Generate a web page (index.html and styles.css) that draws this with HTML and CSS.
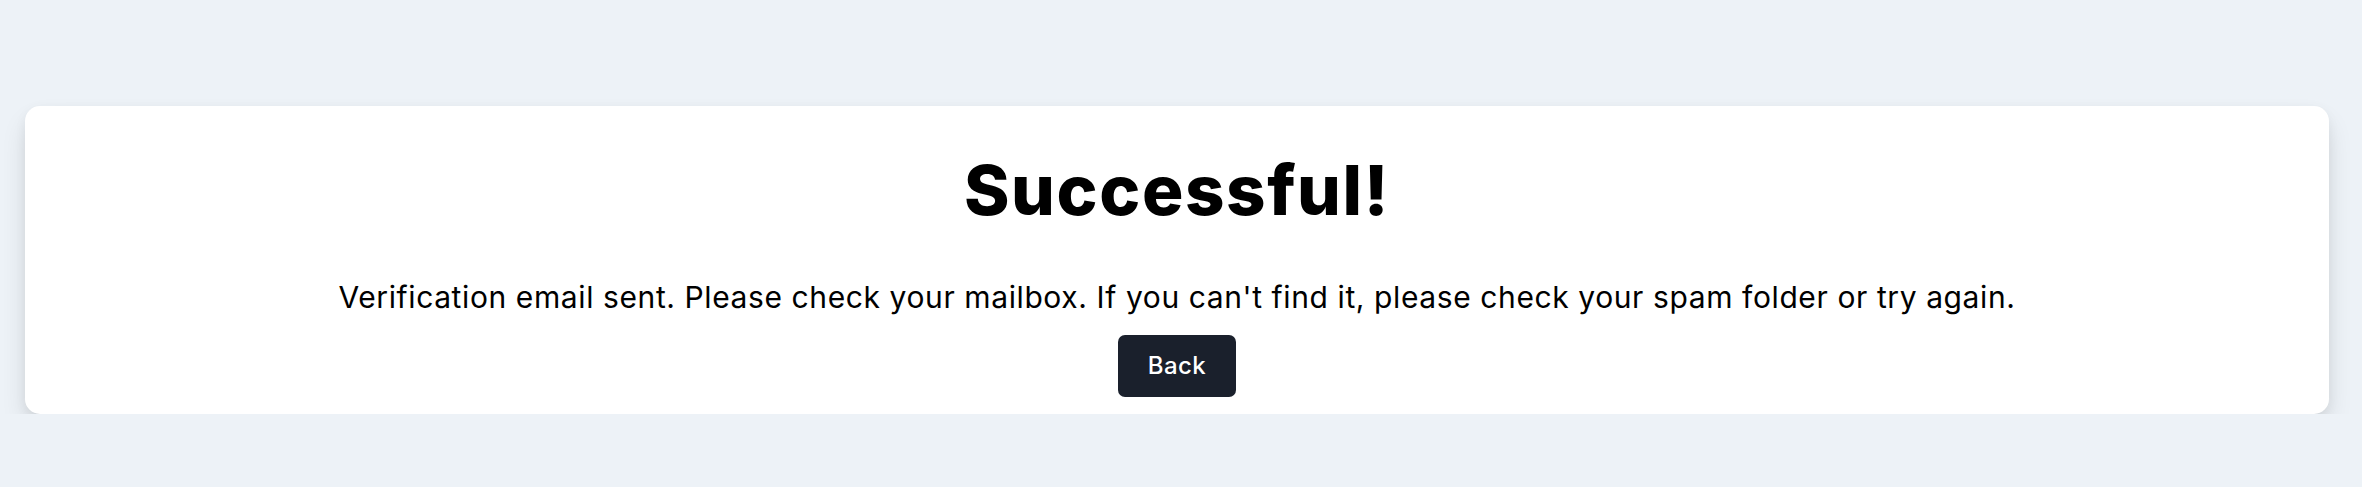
FILE: index.html
```html
<!DOCTYPE html>
<html lang="en">
<head>
<meta charset="utf-8">
<title>Successful!</title>
<link rel="stylesheet" href="styles.css">
</head>
<body>
<main class="page">
  <section class="card">
    <h1 class="title">Successful!</h1>
    <p class="message">Verification email sent. Please check your mailbox. If you can't find it, please check your spam folder or try again.</p>
    <button class="back-btn" type="button">Back</button>
  </section>
</main>
</body>
</html>
```
FILE: styles.css
```css
html, body {
  margin: 0;
  padding: 0;
  background: #edf2f7;
}
body {
  font-family: Inter, "Liberation Sans", sans-serif;
  color: #000;
}
.page {
  padding: 106px 33px 0 25px;
}
.card {
  background: #fff;
  border-radius: 15px;
  box-shadow: 0 14px 28px -4px rgba(0, 0, 0, 0.14), 0 4px 12px rgba(0, 0, 0, 0.05);
  padding: 48px 20px 17px;
  display: flex;
  flex-direction: column;
  align-items: center;
}
.title {
  margin: 0;
  font-size: 69px;
  line-height: 72px;
  font-weight: 800;
  letter-spacing: 1.6px;
}
.message {
  margin: 51px 0 0;
  font-size: 30px;
  line-height: 40px;
  font-weight: 400;
  letter-spacing: 0.6px;
}
.back-btn {
  margin-top: 18px;
  font-family: Inter, "Liberation Sans", sans-serif;
  font-size: 24px;
  line-height: 32px;
  font-weight: 500;
  letter-spacing: 0.4px;
  color: #fff;
  background: #1a202c;
  border: 0;
  border-radius: 7px;
  padding: 15px 30px;
  cursor: pointer;
}
```
